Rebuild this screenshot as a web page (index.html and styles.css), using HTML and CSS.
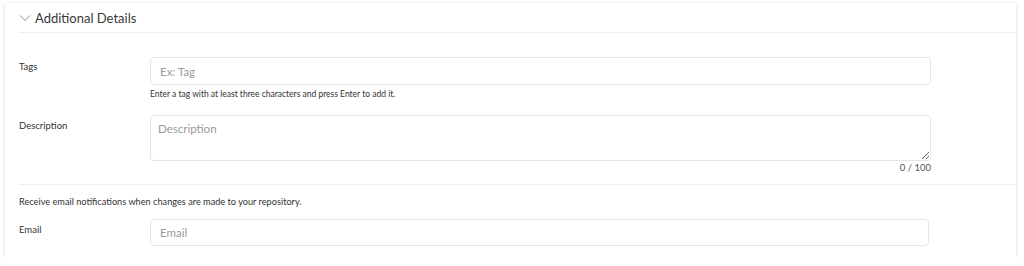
FILE: index.html
```html
<!DOCTYPE html>
<html lang="en">
<head>
    <meta charset="UTF-8">
    <meta name="viewport" content="width=device-width, initial-scale=1.0">
    <title>Additional Details</title>
    <link rel="stylesheet" href="styles.css">
</head>
<body>

<div class="card">
    <!-- Collapsible header -->
    <div class="card-header">
        <svg class="chevron" width="12" height="8" viewBox="0 0 12 8">
            <path d="M1 1.5 L6 6.5 L11 1.5" fill="none" stroke="#8a8f96" stroke-width="1"/>
        </svg>
        <h2>Additional Details</h2>
    </div>

    <div class="section">
        <div class="form-row">
            <label for="tags">Tags</label>
            <div class="field">
                <input type="text" id="tags" placeholder="Ex: Tag">
                <div class="help">Enter a tag with at least three characters and press Enter to add it.</div>
            </div>
        </div>

        <div class="form-row row-desc">
            <label for="description">Description</label>
            <div class="field">
                <textarea id="description" placeholder="Description"></textarea>
                <div class="counter">0 / 100</div>
            </div>
        </div>
    </div>

    <div class="section section-email">
        <p class="note">Receive email notifications when changes are made to your repository.</p>
        <div class="form-row">
            <label for="email">Email</label>
            <div class="field field-email">
                <input type="email" id="email" placeholder="Email">
            </div>
        </div>
    </div>
</div>

</body>
</html>
```

FILE: styles.css
```css
body {
    font-family: 'Lato', 'Open Sans', sans-serif;
    background-color: #fff;
    margin: 0;
    padding: 3px 8px 0 5px;
    color: #333;
}

.card {
    background-color: #fff;
    box-shadow: 0 1px 4px rgba(0, 0, 0, 0.16);
    height: 254px;
    box-sizing: border-box;
}

.card-header {
    display: flex;
    align-items: center;
    gap: 4px;
    height: 29px;
    margin-left: 14px;
    border-bottom: 1px solid #efefef;
}

.chevron {
    margin-top: 1px;
}

h2 {
    margin: 0;
    font-size: 13px;
    font-weight: 400;
    color: #3a3a3a;
}

.section {
    margin-left: 14px;
    padding-top: 24px;
    height: 152px;
    box-sizing: border-box;
    border-bottom: 1px solid #efefef;
}

.form-row {
    display: flex;
}

label {
    width: 131px;
    flex-shrink: 0;
    font-size: 9.5px;
    color: #333;
    padding-top: 4px;
}

.field {
    width: 781px;
}

.field-email {
    width: 779px;
}

input, textarea {
    width: 100%;
    height: 28px;
    padding: 0 9px;
    border: 1px solid #e3e5e8;
    border-radius: 4px;
    box-sizing: border-box;
    font-family: inherit;
    font-size: 11.5px;
    color: #333;
    outline: none;
    display: block;
}

input::placeholder, textarea::placeholder {
    color: #9a9a9a;
}

.help {
    font-size: 8.5px;
    color: #333;
    margin-top: 4px;
}

.row-desc {
    margin-top: 16px;
}

.row-desc label {
    padding-top: 5px;
}

textarea {
    height: 46px;
    padding: 6px 7px;
    resize: vertical;
}

.counter {
    text-align: right;
    font-size: 9.5px;
    color: #555;
    margin-top: 1px;
}

.section-email {
    border-bottom: none;
    padding-top: 11px;
    height: auto;
}

.note {
    margin: 0 0 12px;
    font-size: 9.2px;
    color: #333;
}

.section-email label {
    padding-top: 5px;
}

.field-email input {
    height: 27px;
}
```
